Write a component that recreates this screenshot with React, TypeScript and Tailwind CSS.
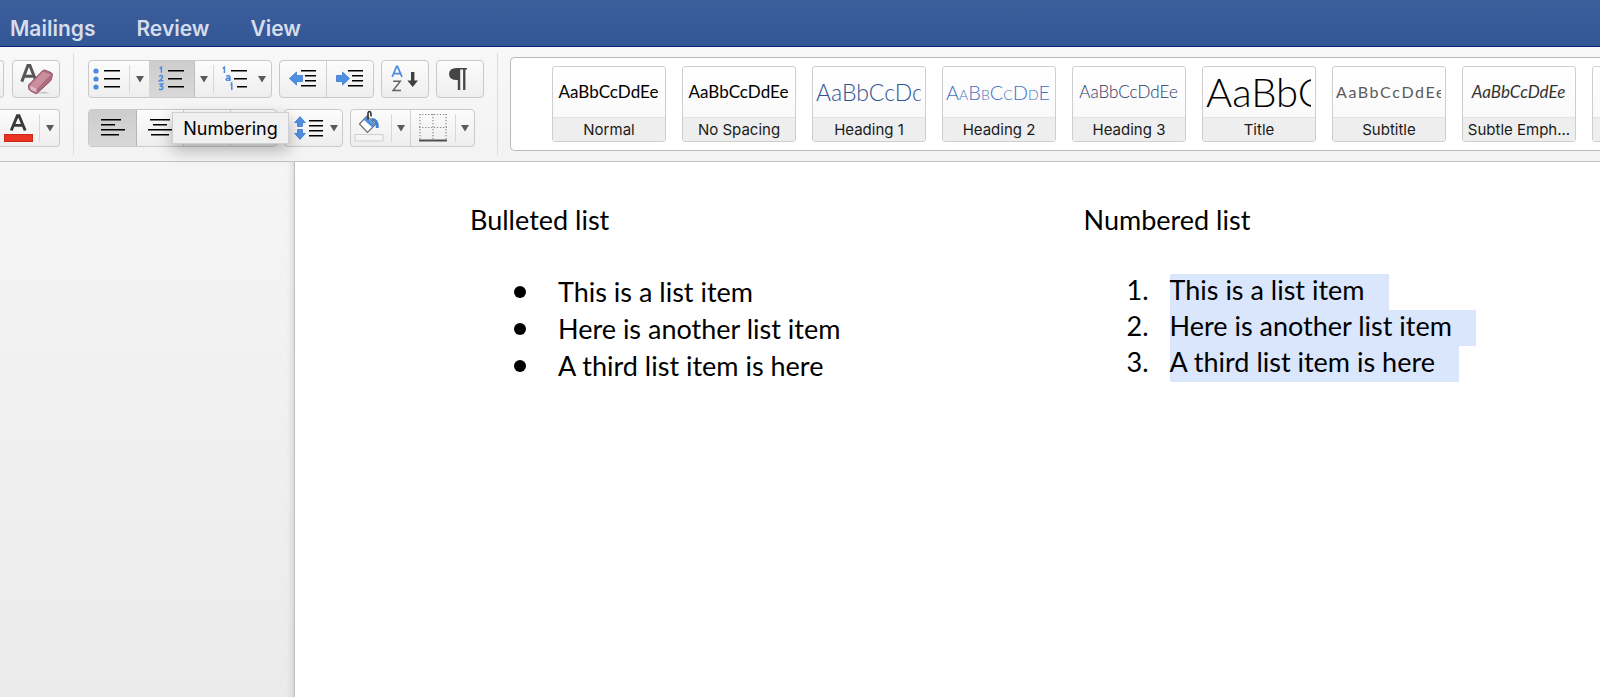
import React from 'react';

const blue = '#4a8ae0';
const ink = '#000000';

type Seg = [number, number, number];

function Lines({ rows, color = ink }: { rows: Seg[]; color?: string }) {
  return (
    <>
      {rows.map(([x1, x2, y]) => (
        <rect key={y} x={x1} y={y} width={x2 - x1} height={1.5} fill={color} />
      ))}
    </>
  );
}

function Caret() {
  return (
    <svg width="8" height="7" viewBox="0 0 8 7" aria-hidden="true">
      <path d="M0 0h8L4 6.6z" fill="#5a5a5a" />
    </svg>
  );
}

function EraserIcon() {
  return (
    <svg width="36" height="32" viewBox="0 0 36 32" aria-hidden="true">
      <path d="M3.8 18.6 9.9 2.4h2L18 18M5.8 13.2h9" fill="none" stroke="#55565a" strokeWidth="3" />
      <path d="M15 30.5h17l-5-2z" fill="#c4c4c4" />
      <g transform="translate(0 -1)">
        <path d="M10.5 23 24.5 8.8q1.2-1 2.6-.6l6 2.4q1.6.9 1.2 2.6l-1 4.4q-.3.9-1 1.6L19.4 31q-1 .9-2.2.4l-5.6-3.2q-1-.8-.8-2z" fill="#b06c7f" stroke="#8f5163" strokeWidth="1" />
        <path d="M12 23.4 24.8 9.8l8 2.8L19.4 26.6z" fill="#c98f9f" />
        <path d="m11.5 23.6 7.4 3-1 4-5.4-3z" fill="#e0b9c3" />
      </g>
    </svg>
  );
}

function FontColorIcon() {
  return (
    <svg width="30" height="30" viewBox="0 0 30 30" aria-hidden="true">
      <path d="M8.2 17.5 14.4 2.6H16l6.2 14.9M10.2 12.4h10" fill="none" stroke="#38393d" strokeWidth="2.9" />
      <rect x="1.5" y="21.5" width="28" height="7" fill="#ea3323" stroke="#c9291b" strokeWidth="1" />
    </svg>
  );
}

function BulletsIcon() {
  return (
    <svg width="28" height="24" viewBox="0 0 28 24" aria-hidden="true">
      {[3, 11, 19].map((y) => (
        <circle key={y} cx="3" cy={y + 1} r="2.6" fill={blue} />
      ))}
      <Lines rows={[[11, 27, 3], [11, 27, 11], [11, 27, 19]]} />
    </svg>
  );
}

function NumbersIcon() {
  return (
    <svg width="28" height="26" viewBox="0 0 28 26" aria-hidden="true">
      <g fill="none" stroke={blue} strokeWidth="1.5">
        <path d="M1.6 2.3 3.4 1.2V6.8" />
        <path d="M1.2 10.4q2-1.6 3.2-.2.7 1.6-3 4.6h4" />
        <path d="M1.2 18h3.6l-2 2.2q2.4.2 2 2.2-.8 1.8-3.8.8" />
      </g>
      <Lines rows={[[10, 26, 4], [10, 24, 12], [10, 26, 20]]} />
    </svg>
  );
}

function MultilevelIcon() {
  return (
    <svg width="26" height="26" viewBox="0 0 26 26" aria-hidden="true">
      <g fill="none" stroke={blue} strokeWidth="1.5">
        <path d="M.6 2.3 2.4 1.2V7" />
        <path d="M4.2 10.2q3.6-1.2 3.8 1V15M8 12q-4-.3-3.9 1.5.8 1.8 3.9-.1" />
        <path d="M8.4 18.6h1.4V24M9.6 16v1.4" />
      </g>
      <Lines rows={[[9, 25, 4], [12, 25, 12], [15, 25, 20]]} />
    </svg>
  );
}

function IndentIcon({ flip }: { flip?: boolean }) {
  return (
    <svg width="28" height="20" viewBox="0 0 28 20" aria-hidden="true">
      <path
        d={flip ? 'M13.5 9.5 6.5 3v3.5h-6v6h6V16z' : 'M.5 9.5 7.5 3v3.5h6v6h-6V16z'}
        fill="#4f8fe3"
        stroke="#3c78cb"
        strokeWidth="0.8"
      />
      <Lines rows={[[12, 27, 1], [16, 27, 6], [16, 27, 11], [12, 27, 16]]} />
    </svg>
  );
}

function SortIcon() {
  return (
    <svg width="28" height="30" viewBox="0 0 28 30" aria-hidden="true">
      <path d="M1.2 13 5.6 2.4h.9L11 13M2.8 9.6h6.5" fill="none" stroke={blue} strokeWidth="1.7" />
      <path d="M2.2 17.3h7.2L2 26.5h8" fill="none" stroke="#606060" strokeWidth="1.4" />
      <path d="M20 8h3.4v8.6h3.6l-5.3 6.4-5.3-6.4H20z" fill="#3f3f3f" />
    </svg>
  );
}

function PilcrowIcon() {
  return (
    <svg width="20" height="24" viewBox="0 0 20 24" aria-hidden="true">
      <path d="M8.5 1H19v1.6h-1.6V23h-2.3V2.6h-2.9V23H9.8V13q-8.6.4-8.8-6Q1.2 1 8.5 1z" fill="#454545" />
    </svg>
  );
}

function AlignIcon({ rows }: { rows: Seg[] }) {
  return (
    <svg width="26" height="18" viewBox="0 0 26 18" aria-hidden="true">
      <Lines rows={rows} />
    </svg>
  );
}

function LineSpacingIcon() {
  return (
    <svg width="30" height="24" viewBox="0 0 30 24" aria-hidden="true">
      <g fill="#4f8fe3" stroke="#3c78cb" strokeWidth="0.8">
        <path d="M6 .6l5.300 6H8.500v3.800h-5V6.600H.7z" />
        <path d="M6 23.400l5.300-6H8.500v-3.800h-5v3.800H.7z" />
      </g>
      <Lines rows={[[15, 29, 4], [15, 29, 9], [15, 29, 14], [15, 29, 19]]} />
    </svg>
  );
}

function ShadingIcon() {
  return (
    <svg width="30" height="32" viewBox="0 0 30 32" aria-hidden="true">
      <path d="M5.5 14 13 6l8.500 8.500L13.500 22.500z" fill="#fff" stroke="#6b6b6b" strokeWidth="1.2" />
      <path d="m9.800 9.800 2.700-2.800 8.500 8-2.600 2.600z" fill="#4f8fe3" />
      <path d="M17.500 9.500q6-.5 5.800 8.500" fill="none" stroke="#3f7fd0" strokeWidth="3" />
      <path d="M14 9.500V3q1-2.400 2.600-.8L17.200 6.500" fill="none" stroke="#333" strokeWidth="1.6" />
      <rect x="1" y="24.5" width="28" height="6.5" fill="#f4f4f4" stroke="#cfcfcf" />
    </svg>
  );
}

function BordersIcon() {
  return (
    <svg width="28" height="30" viewBox="0 0 28 30" aria-hidden="true">
      <path d="M0 1.5h28M0 14.5h28M1 1v25M14 1v25M27 1v25" stroke="#8a8a8a" strokeWidth="1.2" strokeDasharray="1.3 1.7" />
      <rect x="0" y="26.5" width="28" height="2" fill="#4f4f4f" />
    </svg>
  );
}

function Group({ children, className = '' }: { children?: React.ReactNode; className?: string }) {
  return (
    <div className={`flex h-[38px] shrink-0 rounded-[4px] border border-[#c9c9c9] bg-linear-to-b from-[#fcfcfc] to-[#eeeeee] ${className}`}>
      {children}
    </div>
  );
}

function Tool({ label, className = '', children, pressed }: { label: string; className?: string; children?: React.ReactNode; pressed?: boolean }) {
  return (
    <button
      type="button"
      aria-label={label}
      aria-pressed={pressed}
      className={`flex h-full shrink-0 items-center justify-center ${pressed ? 'bg-linear-to-b from-[#cdcdcd] to-[#d8d8d8]' : ''} ${className}`}
    >
      {children}
    </button>
  );
}

function Rule() {
  return <span className="my-1 w-px shrink-0 bg-[#d8d8d8]" />;
}

const styles = [
  { name: 'Normal', sample: 'text-[17px] text-black justify-center font-normal' },
  { name: 'No Spacing', sample: 'text-[17px] text-black justify-center font-normal' },
  { name: 'Heading 1', sample: 'text-[23px] text-[#2f5496] font-light' },
  { name: 'Heading 2', sample: 'text-[20px] text-[#4472c4] font-light [font-variant:small-caps]' },
  { name: 'Heading 3', sample: 'text-[17px] text-[#1f3763] justify-center font-light' },
  { name: 'Title', sample: 'text-[40px] text-black font-light' },
  { name: 'Subtitle', sample: 'text-base text-[#5a5a5a] tracking-widest' },
  { name: 'Subtle Emph...', sample: 'text-[17px] text-[#333333] justify-center italic' },
  { name: 'Emphasis', sample: 'text-[17px] text-black justify-center italic' },
];

function StyleCard({ name, sample }: { name: string; sample: string }) {
  return (
    <button
      type="button"
      className="flex h-[76px] w-[114px] shrink-0 flex-col overflow-hidden rounded-[3px] border border-[#cecece] bg-linear-to-b from-white to-[#f7f7f7]"
    >
      <span className="flex w-full flex-1 items-center pr-1 pl-[3px]">
        <span className={`flex h-[50px] w-full items-center overflow-hidden whitespace-nowrap font-['Lato',sans-serif] ${sample}`}>
          AaBbCcDdEe
        </span>
      </span>
      <span className="h-6 w-full border-t border-[#e4e4e4] bg-[#eeeeee] text-center text-[15px] leading-6 whitespace-nowrap text-[#1a1a1a]">
        {name}
      </span>
    </button>
  );
}

const items = ['This is a list item', 'Here is another list item', 'A third list item is here'];

export default function App() {
  return (
    <div className="flex min-h-screen flex-col overflow-hidden bg-white font-['Inter',sans-serif] text-black">
      <nav className="flex h-[47px] items-center gap-[41px] border-b border-[#0c1f78] bg-linear-to-b from-[#3c5e9b] to-[#335695] px-[10px] pt-[11px] text-[21px] font-semibold text-[#d5dcea]">
        <a href="#mailings">Mailings</a>
        <a href="#review">Review</a>
        <a href="#view">View</a>
      </nav>

      <div role="toolbar" aria-label="Home" className="flex h-[115px] border-b border-[#c4c4c4] bg-linear-to-b from-[#f8f8f8] to-[#f3f3f3]">
        <div className="flex w-[60px] shrink-0 flex-col gap-[11px] pt-[13px]">
          <div className="flex justify-between">
            <Group className="w-1 rounded-l-none border-l-0" />
            <Group className="w-12">
              <Tool label="Clear formatting" className="w-full"><EraserIcon /></Tool>
            </Group>
          </div>
          <Group className="rounded-l-none border-l-0">
            <Tool label="Font color" className="w-[39px] pr-1"><FontColorIcon /></Tool>
            <Rule />
            <Tool label="Font color options" className="flex-1"><Caret /></Tool>
          </Group>
        </div>

        <div className="mr-[14px] ml-[13px] my-1.5 w-px shrink-0 bg-[#dcdcdc]" />

        <div className="flex shrink-0 flex-col gap-[11px] pt-[13px]">
          <div className="flex gap-[7px]">
            <Group className="w-[184px]">
              <Tool label="Bullets" className="w-10 pr-1"><BulletsIcon /></Tool>
              <Rule />
              <Tool label="Bullet options" className="w-[19px]"><Caret /></Tool>
              <Tool label="Numbering list" pressed className="w-[46px] border-r border-[#bdbdbd]"><NumbersIcon /></Tool>
              <Tool label="Numbering options" className="w-[18px]"><Caret /></Tool>
              <Rule />
              <Tool label="Multilevel list" className="w-[38px] pl-1"><MultilevelIcon /></Tool>
              <Tool label="Multilevel options" className="flex-1"><Caret /></Tool>
            </Group>
            <Group className="w-[95px]">
              <Tool label="Decrease indent" className="flex-1"><IndentIcon /></Tool>
              <span className="w-px bg-[#d0d0d0]" />
              <Tool label="Increase indent" className="flex-1"><IndentIcon flip /></Tool>
            </Group>
            <Group className="w-12">
              <Tool label="Sort" className="w-full"><SortIcon /></Tool>
            </Group>
            <Group className="w-12">
              <Tool label="Show formatting marks" className="w-full pr-1"><PilcrowIcon /></Tool>
            </Group>
          </div>
          <div className="flex gap-[7px]">
            <div className="relative">
              <Group className="w-[189px]">
                <Tool label="Align left" pressed className="w-12 rounded-l-[3px] border-r border-[#b5b5b5]">
                  <AlignIcon rows={[[1, 21, 0], [1, 15, 5], [1, 25, 10], [1, 19, 15]]} />
                </Tool>
                <Tool label="Align center" className="w-[46px]">
                  <AlignIcon rows={[[3, 23, 0], [6, 20, 5], [1, 25, 10], [4, 22, 15]]} />
                </Tool>
                <span className="w-px bg-[#d0d0d0]" />
                <Tool label="Align right" className="w-[46px]" />
                <span className="w-px bg-[#d0d0d0]" />
                <Tool label="Justify" className="flex-1" />
              </Group>
              <div role="tooltip" className="absolute top-[3px] left-[84px] z-10 flex h-8 w-[117px] items-center justify-center border border-[#cfcfcf] bg-[#f0f0f0] text-[18px] text-black shadow-[0_6px_16px_rgba(0,0,0,0.28)]">
                Numbering
              </div>
            </div>
            <Group className="w-[59px]">
              <Tool label="Line spacing" className="flex-1 gap-1.5 pl-1"><LineSpacingIcon /><Caret /></Tool>
            </Group>
            <Group className="w-[125px]">
              <Tool label="Shading" className="w-10 pr-1 pb-1"><ShadingIcon /></Tool>
              <Rule />
              <Tool label="Shading options" className="w-[18px]"><Caret /></Tool>
              <span className="w-px bg-[#d0d0d0]" />
              <Tool label="Borders" className="w-11"><BordersIcon /></Tool>
              <Rule />
              <Tool label="Border options" className="flex-1"><Caret /></Tool>
            </Group>
          </div>
        </div>

        <div className="mr-3 ml-[13px] my-1.5 w-px shrink-0 bg-[#dcdcdc]" />

        <div className="mt-2.5 flex h-[94px] min-w-0 flex-1 items-center gap-4 overflow-hidden rounded-l-[5px] border border-r-0 border-[#b9b9b9] bg-white pl-[41px]">
          {styles.map((s) => (
            <StyleCard key={s.name} {...s} />
          ))}
        </div>
      </div>

      <div className="flex flex-1">
        <aside className="w-[295px] shrink-0 border-r border-[#c0c0c0] bg-linear-to-b from-[#f5f5f5] to-[#ebebeb] shadow-[inset_-8px_0_8px_-8px_rgba(0,0,0,0.18)]" />
        <main className="grid flex-1 grid-cols-[613fr_516fr] pt-10 pl-[175px] font-['Lato',sans-serif] text-[27px]">
          <section>
            <h2 className="leading-9">Bulleted list</h2>
            <ul className="mt-9 flex flex-col gap-px pl-11">
              {items.map((t) => (
                <li key={t} className="flex items-center leading-9">
                  <span className="mr-8 size-3 rounded-full bg-black" />
                  {t}
                </li>
              ))}
            </ul>
          </section>
          <section>
            <h2 className="leading-9">Numbered list</h2>
            <ol className="mt-9 pl-[43px]">
              {items.map((t, i) => (
                <li key={t} className="flex h-9 leading-8">
                  <span className="w-[43px]">{i + 1}.</span>
                  <mark className="bg-[#dae6fc] pr-6 text-black">{t}</mark>
                </li>
              ))}
            </ol>
          </section>
        </main>
      </div>
    </div>
  );
}
